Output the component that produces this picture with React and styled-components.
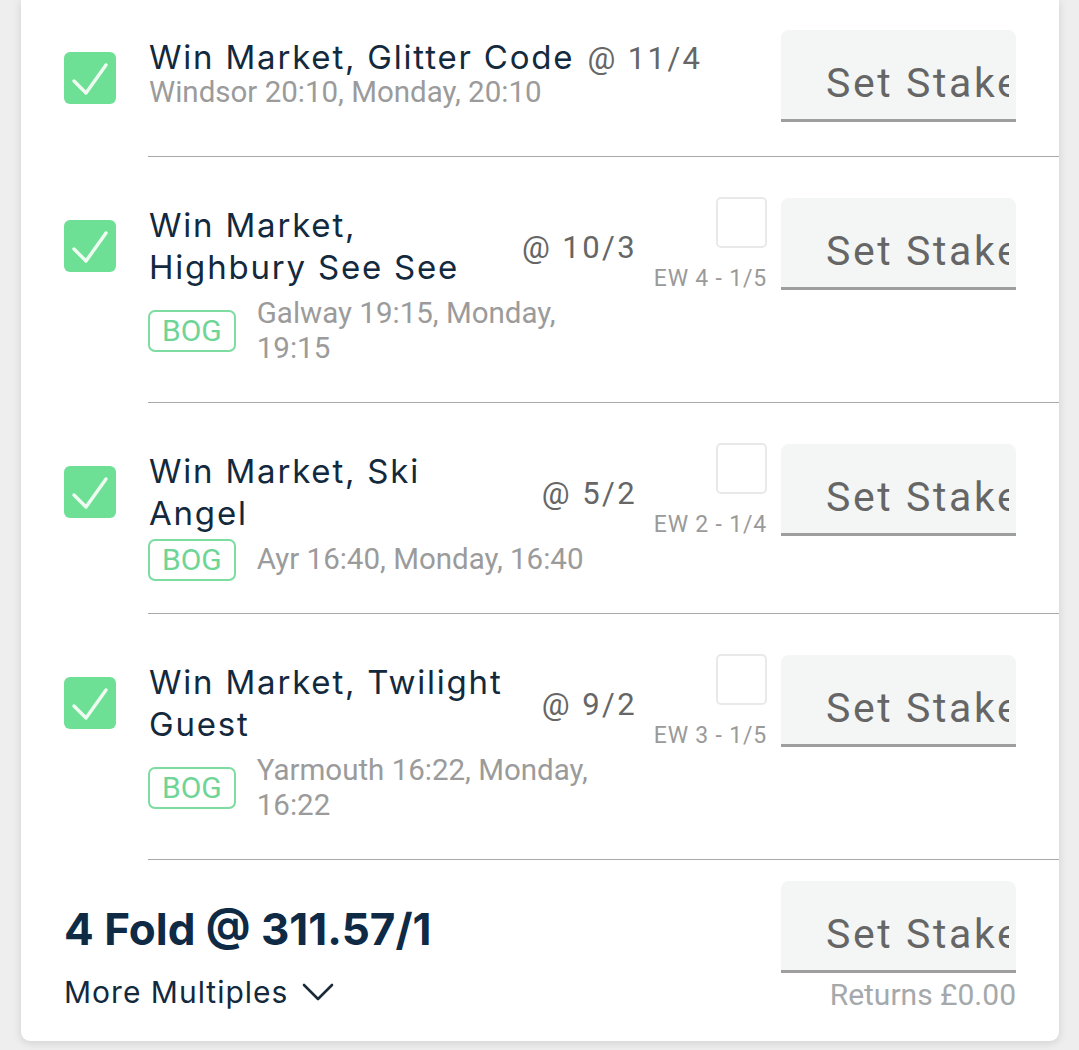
import styled, { createGlobalStyle } from "styled-components";

const GlobalStyle = createGlobalStyle`
  html, body {
    margin: 0;
    padding: 0;
    background: #eeeeee;
  }
  * {
    box-sizing: border-box;
  }
`;

const selections = [
  {
    title: "Win Market, Glitter Code",
    odds: "@ 11/4",
    meta: "Windsor 20:10, Monday, 20:10",
    bog: false,
    ew: null,
  },
  {
    title: "Win Market, Highbury See See",
    odds: "@ 10/3",
    meta: "Galway 19:15, Monday, 19:15",
    bog: true,
    ew: "EW 4 - 1/5",
  },
  {
    title: "Win Market, Ski Angel",
    odds: "@ 5/2",
    meta: "Ayr 16:40, Monday, 16:40",
    bog: true,
    ew: "EW 2 - 1/4",
  },
  {
    title: "Win Market, Twilight Guest",
    odds: "@ 9/2",
    meta: "Yarmouth 16:22, Monday, 16:22",
    bog: true,
    ew: "EW 3 - 1/5",
  },
];

const Tick = () => (
  <svg width="52" height="52" viewBox="0 0 52 52">
    <polyline
      points="10,29 22,41 42,13"
      fill="none"
      stroke="#effcf2"
      strokeWidth="3.4"
      strokeLinecap="round"
      strokeLinejoin="round"
    />
  </svg>
);

const Chevron = () => (
  <svg width="32" height="20" viewBox="0 0 32 20">
    <polyline
      points="2,3 16,17 30,3"
      fill="none"
      stroke="#1b2a38"
      strokeWidth="2.6"
      strokeLinecap="round"
      strokeLinejoin="round"
    />
  </svg>
);

const StakeInput = () => (
  <Stake>
    <StakeText>Set Stake</StakeText>
  </Stake>
);

const Selection = ({ data, first }) => {
  const { title, odds, meta, bog, ew } = data;
  return (
    <Row>
      <CheckCol $first={first}>
        <Checkbox>
          <Tick />
        </Checkbox>
      </CheckCol>
      <Body $first={first}>
        {first ? (
          <Info $first>
            <WideTitle>
              {title} <InlineOdds>{odds}</InlineOdds>
            </WideTitle>
            <SubLine>{meta}</SubLine>
          </Info>
        ) : (
          <Info>
            <TitleLine>
              <Title>{title}</Title>
              <Odds>{odds}</Odds>
            </TitleLine>
            <MetaRow>
              {bog && <Bog>BOG</Bog>}
              <MetaText>{meta}</MetaText>
            </MetaRow>
          </Info>
        )}
        {ew && (
          <EwCol>
            <EwBox />
            <EwLabel>{ew}</EwLabel>
          </EwCol>
        )}
        <StakeInput />
      </Body>
    </Row>
  );
};

const App = () => {
  return (
    <Page>
      <GlobalStyle />
      <Card>
        {selections.map((s, i) => (
          <Selection key={s.title} data={s} first={i === 0} />
        ))}
        <Footer>
          <FoldCol>
            <FoldTitle>4 Fold @ 311.57/1</FoldTitle>
            <MoreMultiples>
              More Multiples <Chevron />
            </MoreMultiples>
          </FoldCol>
          <StakeCol>
            <StakeInput />
            <Returns>Returns £0.00</Returns>
          </StakeCol>
        </Footer>
      </Card>
    </Page>
  );
};

export default App;

const Page = styled.div`
  min-height: 1050px;
  padding: 0 20px 9px 21px;
  background: #eeeeee;
`;

const Card = styled.div`
  background: #ffffff;
  border-radius: 0 0 9px 9px;
  box-shadow: 0 2px 10px rgba(0, 0, 0, 0.13);
  overflow: hidden;
`;

const Row = styled.div`
  display: flex;
  align-items: flex-start;
  padding-left: 43px;
`;

const CheckCol = styled.div`
  flex: none;
  width: 84px;
  padding-top: ${(p) => (p.$first ? 52 : 63)}px;
`;

const Checkbox = styled.div`
  width: 52px;
  height: 52px;
  border-radius: 6px;
  background: #6ee095;
  display: flex;
  align-items: center;
  justify-content: center;
`;

const Body = styled.div`
  flex: 1;
  display: flex;
  align-items: flex-start;
  padding: ${(p) => (p.$first ? "30px 43px 34px 0" : "41px 43px 32px 0")};
  border-bottom: 1px solid #a9a9a9;
`;

const Info = styled.div`
  flex: 1;
  min-width: 0;
  padding-top: ${(p) => (p.$first ? 9 : 6)}px;
  padding-left: 1px;
`;

const WideTitle = styled.div`
  font-family: Inter, "Noto Sans", sans-serif;
  font-size: 33px;
  line-height: 36px;
  letter-spacing: 1.8px;
  color: #13293d;
  white-space: nowrap;
`;

const InlineOdds = styled.span`
  font-family: Roboto, "Liberation Sans", sans-serif;
  font-size: 31px;
  letter-spacing: 2.4px;
  color: #666666;
  margin-left: 2px;
`;

const SubLine = styled.div`
  font-family: Roboto, "Liberation Sans", sans-serif;
  font-size: 29.5px;
  line-height: 30px;
  color: #9b9b9b;
`;

const TitleLine = styled.div`
  display: flex;
  align-items: center;
`;

const Title = styled.div`
  max-width: 364px;
  font-family: Inter, "Noto Sans", sans-serif;
  font-size: 33px;
  line-height: 42px;
  letter-spacing: 1.8px;
  color: #13293d;
`;

const Odds = styled.div`
  margin-left: auto;
  flex: none;
  font-family: Roboto, "Liberation Sans", sans-serif;
  font-size: 31px;
  letter-spacing: 2.4px;
  color: #666666;
  padding-top: 3px;
`;

const MetaRow = styled.div`
  display: flex;
  align-items: center;
  margin-top: 4px;
`;

const Bog = styled.div`
  flex: none;
  height: 42px;
  padding: 0 12px;
  border: 2.5px solid #7ddca0;
  border-radius: 7px;
  font-family: Roboto, "Liberation Sans", sans-serif;
  font-size: 30px;
  line-height: 37px;
  color: #6fd597;
  margin-right: 21px;
  margin-left: -1px;
`;

const MetaText = styled.div`
  max-width: 350px;
  padding: 4px 0;
  font-family: Roboto, "Liberation Sans", sans-serif;
  font-size: 29.5px;
  line-height: 35px;
  color: #9b9b9b;
`;

const EwCol = styled.div`
  flex: none;
  width: 112px;
  margin-left: 18px;
  margin-top: -1px;
  display: flex;
  flex-direction: column;
  align-items: flex-end;
`;

const EwBox = styled.div`
  width: 51px;
  height: 51px;
  border: 2px solid #e9e9e9;
  border-radius: 5px;
  background: #ffffff;
`;

const EwLabel = styled.div`
  margin-top: 17px;
  font-family: Roboto, "Liberation Sans", sans-serif;
  font-size: 23px;
  line-height: 28px;
  letter-spacing: 0.8px;
  color: #9a9a9a;
  white-space: nowrap;
`;

const Stake = styled.div`
  flex: none;
  width: 235px;
  height: 92px;
  margin-left: 14px;
  padding: 17px 7px 0 45px;
  background: #f4f6f6;
  border-radius: 8px 8px 0 0;
  border-bottom: 3px solid #9e9e9e;
  display: flex;
  align-items: center;
`;

const StakeText = styled.div`
  width: 100%;
  overflow: hidden;
  white-space: nowrap;
  font-family: Roboto, "Liberation Sans", sans-serif;
  font-size: 41px;
  line-height: 48px;
  letter-spacing: 2.6px;
  color: #666666;
`;

const Footer = styled.div`
  margin-left: 42px;
  padding: 21px 43px 28px 1px;
  display: flex;
  align-items: flex-start;
  justify-content: space-between;
`;

const FoldCol = styled.div`
  padding-top: 21px;
`;

const FoldTitle = styled.div`
  font-family: Inter, "Noto Sans", sans-serif;
  font-weight: 700;
  font-size: 44px;
  line-height: 54px;
  color: #0f2a44;
`;

const MoreMultiples = styled.div`
  margin-top: 18px;
  display: flex;
  align-items: center;
  gap: 14px;
  font-family: Inter, "Noto Sans", sans-serif;
  font-size: 30px;
  line-height: 36px;
  letter-spacing: 1px;
  color: #13293d;
`;

const StakeCol = styled.div`
  display: flex;
  flex-direction: column;
  align-items: flex-end;

  & > div:first-child {
    margin-left: 0;
  }
`;

const Returns = styled.div`
  margin-top: 4px;
  font-family: Roboto, "Liberation Sans", sans-serif;
  font-size: 30px;
  line-height: 36px;
  color: #a5a9ab;
`;
